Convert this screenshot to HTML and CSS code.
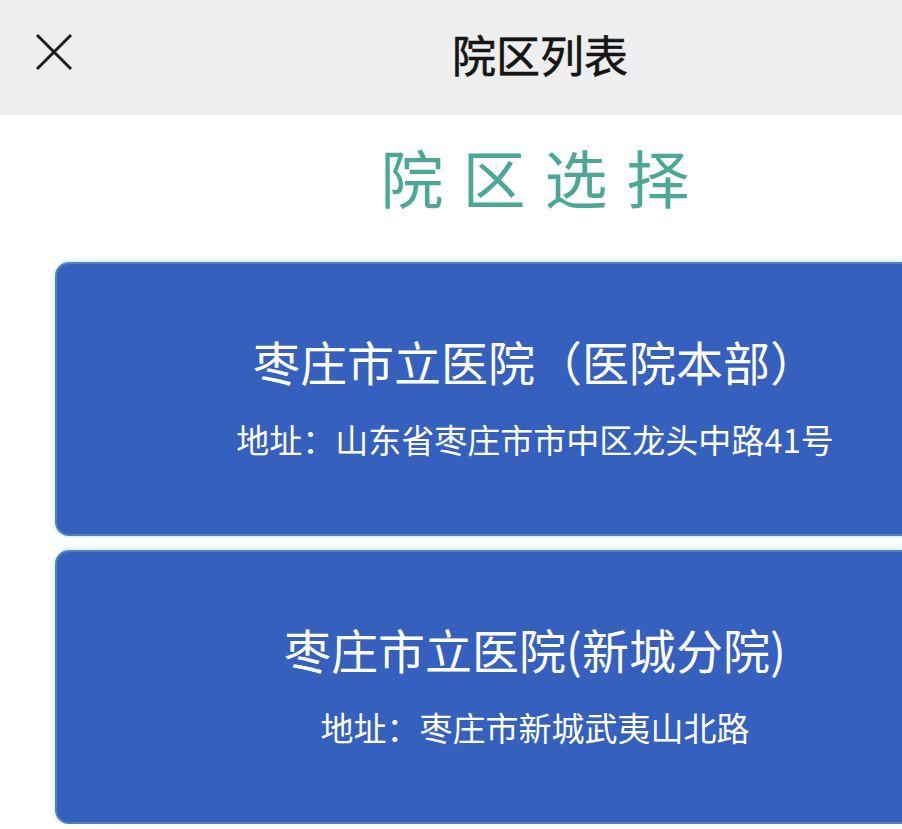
FILE: index.html
```html
<!DOCTYPE html>
<html lang="zh-CN">
<head>
<meta charset="utf-8">
<title>院区列表</title>
<link rel="stylesheet" href="styles.css">
</head>
<body>
<div class="screen">
  <header class="topbar">
    <button class="close" aria-label="关闭">
      <svg width="40" height="40" viewBox="0 0 40 40"><path d="M3 3 L37 37 M37 3 L3 37" stroke="#1e1e1e" stroke-width="3" fill="none"/></svg>
    </button>
    <h1 class="topbar-title">院区列表</h1>
  </header>
  <main class="content">
    <h2 class="section-title">院区选择</h2>
    <div class="card">
      <div class="card-name">枣庄市立医院（医院本部）</div>
      <div class="card-addr">地址：山东省枣庄市市中区龙头中路41号</div>
    </div>
    <div class="card">
      <div class="card-name">枣庄市立医院(新城分院)</div>
      <div class="card-addr">地址：枣庄市新城武夷山北路</div>
    </div>
  </main>
</div>
</body>
</html>
```

FILE: styles.css
```css
html, body {
  margin: 0;
  padding: 0;
  background: #ffffff;
  overflow: hidden;
}
body {
  font-family: "Noto Sans CJK SC", "Noto Sans", sans-serif;
}
.screen {
  width: 1070px;
}
.topbar {
  height: 115px;
  background: #eeeeee;
  display: flex;
  align-items: center;
  justify-content: center;
  position: relative;
}
.close {
  position: absolute;
  left: 34px;
  top: 32px;
  width: 40px;
  height: 40px;
  padding: 0;
  border: 0;
  background: transparent;
  display: block;
}
.close svg { display: block; }
.topbar-title {
  margin: 0;
  margin-top: -8px;
  margin-left: 10px;
  font-size: 44px;
  font-weight: 400;
  -webkit-text-stroke: 0.6px #151515;
  color: #151515;
  line-height: 60px;
}
.content {
  padding: 0 55px;
}
.section-title {
  margin: 0;
  padding-top: 25px;
  height: 116px;
  box-sizing: border-box;
  text-align: center;
  font-size: 63px;
  font-weight: 400;
  line-height: 72px;
  letter-spacing: 19px;
  text-indent: 19px;
  color: #4ba897;
}
.card {
  height: 274px;
  box-sizing: border-box;
  margin-top: 31px;
  background: #3560be;
  border: 2px solid #4f86b8;
  border-radius: 14px;
  box-shadow: 0 0 3px 1px #c8eef5;
  color: #ffffff;
  text-align: center;
  padding-top: 67px;
  display: flex;
  flex-direction: column;
  align-items: center;
}
.card + .card {
  margin-top: 14px;
}
.card-name {
  font-size: 47px;
  line-height: 60px;
}
.card-addr {
  margin-top: 26px;
  font-size: 33px;
  line-height: 44px;
}
```
